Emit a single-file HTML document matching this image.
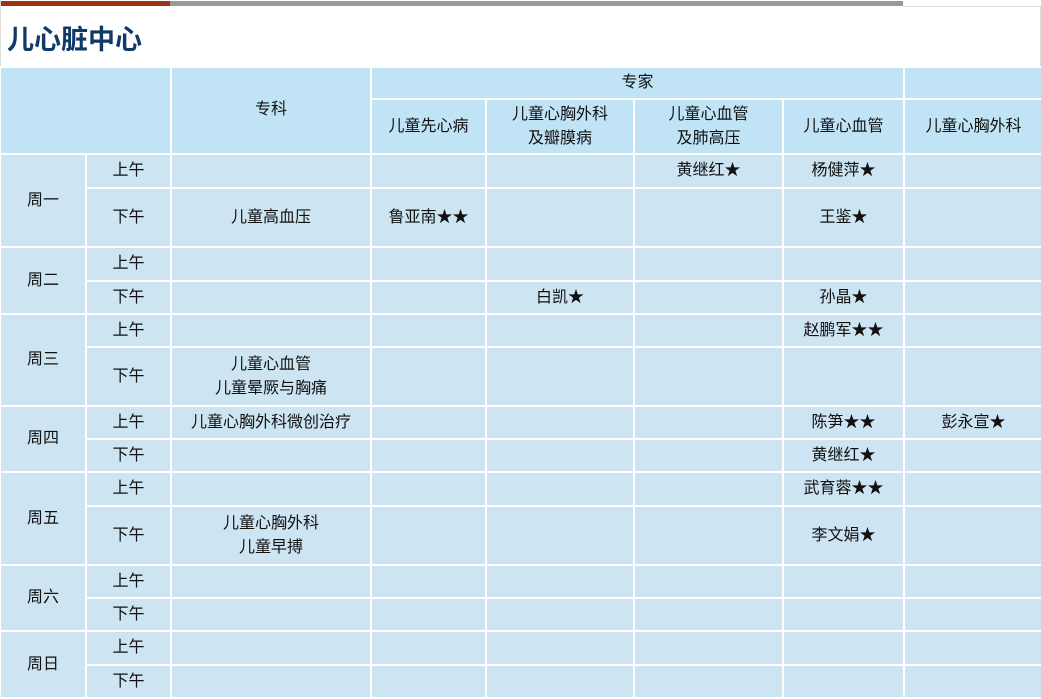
<!DOCTYPE html>
<html><head><meta charset="utf-8"><style>
body{margin:0;width:1041px;height:698px;overflow:hidden;background:#fff;font-family:"Liberation Sans","Noto Sans CJK SC",sans-serif;}
.bar1{position:absolute;left:0;top:1px;width:170px;height:5px;background:#9a3412;}
.bar2{position:absolute;left:170px;top:1px;width:733px;height:5px;background:#999;}
.line{position:absolute;left:903px;top:6px;width:137px;height:1px;background:#ddd;}
.lb{position:absolute;left:0;top:0;width:1px;height:698px;background:#ddd;}
.rb{position:absolute;left:1040px;top:6px;width:1px;height:62px;background:#ddd;}
h1{position:absolute;left:7px;top:18px;margin:0;font-size:27px;font-weight:bold;color:#0f3a66;}
table{position:absolute;left:-1px;top:66px;border-collapse:collapse;table-layout:fixed;width:1043px;}
td{border:2px solid #fff;text-align:center;font-size:16px;color:#111;background:#cde4f2;padding:0;line-height:24px;}
tr.h td{background:#c0e3f6;}
</style></head><body>
<div class="bar1"></div><div class="bar2"></div><div class="line"></div><div class="lb"></div><div class="rb"></div>
<h1>儿心脏中心</h1>
<table>
<colgroup><col style="width:86px"><col style="width:85px"><col style="width:200px"><col style="width:115px"><col style="width:148px"><col style="width:149px"><col style="width:121px"><col style="width:139px"></colgroup>
<tr class="h" style="height:32px"><td colspan="2" rowspan="2"></td><td rowspan="2" style="vertical-align:top;padding-top:30px">专科</td><td colspan="4">专家</td><td></td></tr>
<tr class="h" style="height:55px"><td>儿童先心病</td><td>儿童心胸外科<br>及瓣膜病</td><td>儿童心血管<br>及肺高压</td><td>儿童心血管</td><td>儿童心胸外科</td></tr>
<tr style="height:34px"><td rowspan="2">周一</td><td>上午</td><td></td><td></td><td></td><td>黄继红★</td><td>杨健萍★</td><td></td></tr>
<tr style="height:59px"><td>下午</td><td>儿童高血压</td><td>鲁亚南★★</td><td></td><td></td><td>王鉴★</td><td></td></tr>
<tr style="height:34px"><td rowspan="2">周二</td><td>上午</td><td></td><td></td><td></td><td></td><td></td><td></td></tr>
<tr style="height:33px"><td>下午</td><td></td><td></td><td>白凯★</td><td></td><td>孙晶★</td><td></td></tr>
<tr style="height:33px"><td rowspan="2">周三</td><td>上午</td><td></td><td></td><td></td><td></td><td>赵鹏军★★</td><td></td></tr>
<tr style="height:59px"><td>下午</td><td>儿童心血管<br>儿童晕厥与胸痛</td><td></td><td></td><td></td><td></td><td></td></tr>
<tr style="height:33px"><td rowspan="2">周四</td><td>上午</td><td>儿童心胸外科微创治疗</td><td></td><td></td><td></td><td>陈笋★★</td><td>彭永宣★</td></tr>
<tr style="height:33px"><td>下午</td><td></td><td></td><td></td><td></td><td>黄继红★</td><td></td></tr>
<tr style="height:34px"><td rowspan="2">周五</td><td>上午</td><td></td><td></td><td></td><td></td><td>武育蓉★★</td><td></td></tr>
<tr style="height:59px"><td>下午</td><td>儿童心胸外科<br>儿童早搏</td><td></td><td></td><td></td><td>李文娟★</td><td></td></tr>
<tr style="height:33px"><td rowspan="2">周六</td><td>上午</td><td></td><td></td><td></td><td></td><td></td><td></td></tr>
<tr style="height:33px"><td>下午</td><td></td><td></td><td></td><td></td><td></td><td></td></tr>
<tr style="height:34px"><td rowspan="2">周日</td><td>上午</td><td></td><td></td><td></td><td></td><td></td><td></td></tr>
<tr style="height:33px"><td>下午</td><td></td><td></td><td></td><td></td><td></td><td></td></tr>
</table>
</body></html>
